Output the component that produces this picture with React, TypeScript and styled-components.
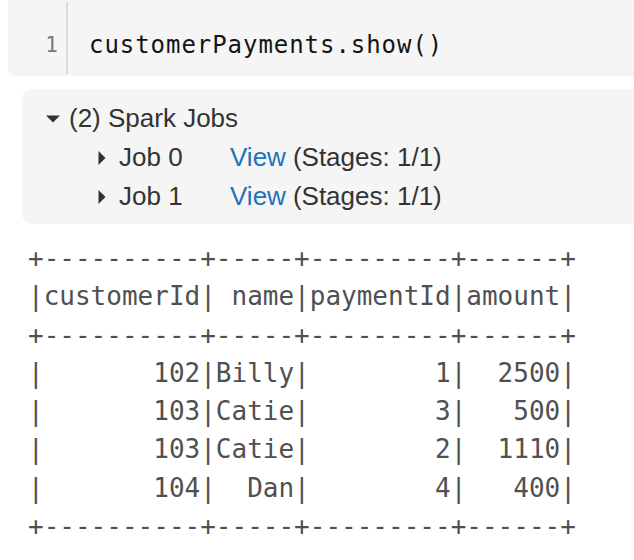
import React from "react";
import styled, { createGlobalStyle } from "styled-components";

const Global = createGlobalStyle`
  html, body { margin: 0; padding: 0; background: #ffffff; overflow: hidden; }
  body { width: 634px; height: 560px; }
`;

const Page = styled.div`
  display: flex;
  flex-direction: column;
  padding-left: 8px;
`;

const CodeCell = styled.div`
  display: flex;
  height: 76px;
  background: #f5f5f5;
  border-radius: 0 0 0 8px;
`;

const Gutter = styled.div`
  width: 60px;
  box-sizing: border-box;
  margin: 2px 0 2px 0;
  border-right: 2px solid #dcdcdc;
  display: flex;
  justify-content: flex-end;
  align-items: center;
  padding-right: 8px;
  padding-top: 13px;
  font-family: "DejaVu Sans Mono", monospace;
  font-size: 21px;
  color: #7a7a7a;
`;

const Code = styled.div`
  display: flex;
  align-items: center;
  padding-left: 21px;
  padding-top: 13px;
  font-family: "DejaVu Sans Mono", monospace;
  font-size: 24px;
  letter-spacing: 0.95px;
  color: #141414;
`;

const JobsBox = styled.div`
  margin: 13px 0 0 14px;
  background: #f5f5f5;
  border-radius: 10px 0 0 10px;
  padding: 10px 0 8px 24px;
  font-family: "Liberation Sans", Arial, sans-serif;
  font-size: 26px;
  color: #333333;
  display: flex;
  flex-direction: column;
`;

const Row = styled.div<{ $indent?: number; $gap: number }>`
  display: flex;
  align-items: center;
  height: 39px;
  padding-left: ${(p) => p.$indent ?? 0}px;
  gap: ${(p) => p.$gap}px;
`;

const JobName = styled.span`
  width: 98px;
`;

const Link = styled.span`
  color: #2272b8;
  margin-right: 7px;
`;

const Caret = styled.svg`
  flex: none;
  display: block;
`;

const Output = styled.pre`
  margin: 15px 0 0 20px;
  font-family: "DejaVu Sans Mono", monospace;
  font-size: 26px;
  line-height: 38.3px;
  color: #505050;
`;

const table = [
  "+----------+-----+---------+------+",
  "|customerId| name|paymentId|amount|",
  "+----------+-----+---------+------+",
  "|       102|Billy|        1|  2500|",
  "|       103|Catie|        3|   500|",
  "|       103|Catie|        2|  1110|",
  "|       104|  Dan|        4|   400|",
  "+----------+-----+---------+------+",
].join("\n");

const DownCaret = () => (
  <Caret width="14" height="8" viewBox="0 0 14 8">
    <path d="M0 0.5 L14 0.5 L7 7.5 Z" fill="#333" />
  </Caret>
);

const RightCaret = () => (
  <Caret width="8" height="14" viewBox="0 0 8 14">
    <path d="M0.5 0 L7.5 7 L0.5 14 Z" fill="#333" />
  </Caret>
);

const jobs = [0, 1];

export default function App() {
  return (
    <>
      <Global />
      <Page>
        <CodeCell>
          <Gutter>1</Gutter>
          <Code>customerPayments.show()</Code>
        </CodeCell>
        <JobsBox>
          <Row $gap={9}>
            <DownCaret />
            <span>(2) Spark Jobs</span>
          </Row>
          {jobs.map((j) => (
            <Row key={j} $indent={52} $gap={13}>
              <RightCaret />
              <JobName>Job {j}</JobName>
              <span>
                <Link>View</Link>(Stages: 1/1)
              </span>
            </Row>
          ))}
        </JobsBox>
        <Output>{table}</Output>
      </Page>
    </>
  );
}
